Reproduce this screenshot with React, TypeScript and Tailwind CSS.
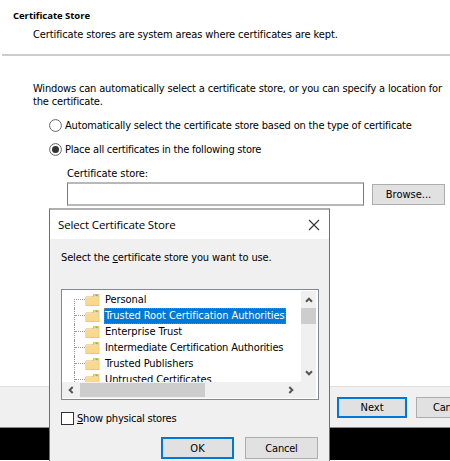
import type { ReactNode } from 'react';

const stores = [
  { name: 'Personal', spacing: 'tracking-[-0.08px]' },
  { name: 'Trusted Root Certification Authorities', spacing: 'tracking-[-0.07px]' },
  { name: 'Enterprise Trust', spacing: 'tracking-[-0.04px]' },
  { name: 'Intermediate Certification Authorities', spacing: 'tracking-[-0.16px]' },
  { name: 'Trusted Publishers', spacing: 'tracking-[-0.08px]' },
  { name: 'Untrusted Certificates', spacing: 'tracking-[-0.11px]' },
];

function Folder() {
  return (
    <svg width="15" height="14" viewBox="0 0 15 14" className="shrink-0">
      <path d="M.5 3.5h7l1-2.5h5.8v12H.5z" fill="#dcb65f" />
      <path d="M1 4h7.5l1-2.3h4V5H1z" fill="#f3dfae" />
      <path d="M1 5h12.8v7.5H1z" fill="#f9da8c" />
      <path d="M10.5 2.5h2" stroke="#6c9fb8" strokeWidth="1.4" />
    </svg>
  );
}

function Chevron({ turn }: { turn: string }) {
  return (
    <svg width="8" height="8" viewBox="0 0 8 8" className={turn}>
      <path d="M1 5.7 4 2.7l3 3" fill="none" stroke="#555" strokeWidth="2" />
    </svg>
  );
}

function Radio({ checked = false, children }: { checked?: boolean; children: ReactNode }) {
  return (
    <div className="flex h-6 items-center gap-[3px] pl-[49px]">
      <svg width="13" height="13" viewBox="0 0 13 13" className="shrink-0">
        <circle cx="6.5" cy="6.5" r="5.9" fill="#fff" stroke="#666" strokeWidth="1" />
        {checked && <circle cx="6.5" cy="6.5" r="3.5" fill="#333" />}
      </svg>
      <div className="pt-[3px]">{children}</div>
    </div>
  );
}

function SelectStoreDialog() {
  return (
    <div className="absolute left-[49px] top-[208px] flex h-[253px] w-[281px] flex-col border-x border-t-2 border-x-[#707070] border-t-[#b0b0b0] bg-[#f0f0f0]">
      <div className="flex h-[29px] shrink-0 items-center justify-between bg-white pl-2 pr-[9px] font-[family-name:'Open_Sans'] text-[11.5px] tracking-[-0.13px]">
        <span>Select Certificate Store</span>
        <svg width="12" height="12" viewBox="0 0 12 12">
          <path d="m1 1 10 10M11 1 1 11" stroke="#333" strokeWidth="1.1" />
        </svg>
      </div>
      <div className="mt-[11px] h-4 shrink-0 pl-[11px] leading-4 tracking-[-0.14px]">
        <span>Select the <u>c</u>ertificate store you want to use.</span>
      </div>
      <div className="ml-[11px] mt-[23px] h-[111px] w-[258px] shrink-0 border border-[#828790] bg-white pt-px">
        <div className="flex h-[91px]">
          <div className="w-[239px] overflow-hidden pl-3 pt-px">
            {stores.map((store, i) => (
              <div key={store.name} className="flex h-4 items-center">
                <div className={i === 0 ? 'flex h-4 w-[11px] flex-col justify-end' : 'flex h-4 w-[11px] border-l border-dotted border-[#999]'}>
                  <div className={i === 0 ? 'h-[9px] w-full border-l border-t border-dotted border-[#999]' : 'mt-[7px] h-px w-full border-t border-dotted border-[#999]'} />
                </div>
                <Folder />
                <span className={i === 1
                  ? `ml-1 h-4 w-[182px] border border-dotted border-[#c86a1e] bg-[#0078d7] leading-[14px] text-white ${store.spacing}`
                  : `ml-[5px] leading-4 ${store.spacing}`}>{store.name}</span>
              </div>
            ))}
          </div>
          <div className="flex w-[15px] flex-col items-center justify-between bg-[#f0f0f0]">
            <div className="flex w-full flex-col items-center">
              <div className="flex h-[17px] items-center"><Chevron turn="" /></div>
              <div className="h-4 w-full bg-[#cdcdcd]" />
            </div>
            <div className="flex h-[18px] items-center"><Chevron turn="rotate-180" /></div>
          </div>
        </div>
        <div className="flex h-4 w-[254px] items-center bg-[#f0f0f0]">
          <div className="flex w-[18px] justify-center"><Chevron turn="-rotate-90" /></div>
          <div className="h-[14px] w-[125px] bg-[#cdcdcd]" />
          <div className="ml-[82px]"><Chevron turn="rotate-90" /></div>
        </div>
      </div>
      <div className="ml-[11px] mt-[11px] flex h-[15px] shrink-0 items-center gap-[3px]">
        <div className="size-[13px] border border-[#333] bg-white" />
        <span className="pt-0.5 tracking-[-0.22px]"><u>S</u>how physical stores</span>
      </div>
      <div className="mt-[11px] flex gap-[11px] pl-[111px] leading-none">
        <div className="flex h-[22px] w-[73px] items-center justify-center border-2 border-[#0078d7] bg-[#e1e1e1]">OK</div>
        <div className="flex h-[22px] w-[73px] items-center justify-center border border-[#adadad] bg-[#e1e1e1] tracking-[-0.2px]">Cancel</div>
      </div>
    </div>
  );
}

export default function App() {
  return (
    <div className="relative flex h-[461px] w-[450px] flex-col overflow-hidden whitespace-nowrap bg-white font-[family-name:'DejaVu_Sans_Condensed','DejaVu_Sans',sans-serif] text-[11px] text-black">
      <header className="h-[54px] shrink-0 pt-2">
        <h1 className="pl-[13px] font-[family-name:'Open_Sans'] text-[9.5px] font-bold leading-[15px] tracking-[-0.03px]"><span>Certificate Store</span></h1>
        <p className="mt-1 pl-[33px] leading-4 tracking-[-0.11px]"><span>Certificate stores are system areas where certificates are kept.</span></p>
      </header>
      <div className="ml-0.5 h-0.5 shrink-0 bg-[#cdcdcd]" />
      <main className="h-[330px] shrink-0 pt-[26px]">
        <p className="pl-[33px] leading-[13px] tracking-[-0.17px]">
          <span>Windows can automatically select a certificate store, or you can specify a location for</span><br />
          <span>the certificate.</span>
        </p>
        <div className="mt-[5px] tracking-[-0.18px]">
          <Radio><span>Automatically select the certificate store based on the type of certificate</span></Radio>
          <Radio checked><span className="tracking-[-0.23px]">Place all certificates in the following store</span></Radio>
        </div>
        <div className="ml-[67px] mt-[5px] h-4 leading-4 tracking-[-0.1px]"><span>Certificate store:</span></div>
        <div className="ml-[67px] flex items-center gap-2">
          <div className="h-6 w-[297px] border-x border-y-2 border-x-[#7a7a7a] border-y-[#b8b8b8] bg-white" />
          <div className="flex h-[21px] w-[73px] items-center justify-center border border-[#adadad] bg-[#e1e1e1] pt-0.5">Browse...</div>
        </div>
      </main>
      <footer className="flex h-[42px] shrink-0 gap-[9px] border-b border-t border-b-[#888] border-t-[#dfdfdf] bg-[#f0f0f0] pl-[337px] pt-2.5">
        <div className="flex h-[21px] w-[70px] shrink-0 items-center justify-center border-2 border-[#0078d7] bg-[#e1e1e1] pt-0.5">Next</div>
        <div className="flex h-[21px] w-[73px] shrink-0 items-center border border-[#adadad] bg-[#e1e1e1] pl-4 pt-0.5 tracking-[-0.2px]">Cancel</div>
      </footer>
      <div className="h-8 shrink-0 bg-black" />
      <SelectStoreDialog />
    </div>
  );
}
